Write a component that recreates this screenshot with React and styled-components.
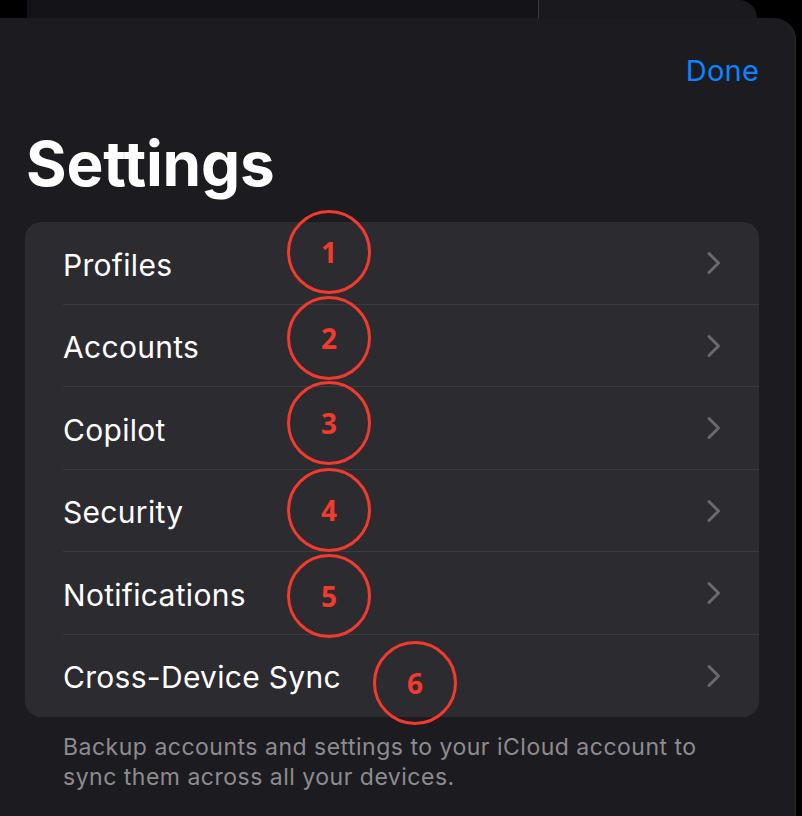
import styled, { createGlobalStyle } from "styled-components";

const GlobalStyle = createGlobalStyle`
  html, body {
    margin: 0;
    padding: 0;
    background: #000;
  }
  body {
    font-family: Inter, "Noto Sans", sans-serif;
    -webkit-font-smoothing: antialiased;
  }
`;

const items = ["Profiles", "Accounts", "Copilot", "Security", "Notifications", "Cross-Device Sync"];

const marks = [
  { n: 1, x: 329, y: 252 },
  { n: 2, x: 329, y: 338 },
  { n: 3, x: 329, y: 423 },
  { n: 4, x: 329, y: 510 },
  { n: 5, x: 329, y: 596 },
  { n: 6, x: 415, y: 683 },
];

const Chevron = () => (
  <svg width="16" height="24" viewBox="0 0 16 24" fill="none">
    <path d="M3 2.5 L12.5 12 L3 21.5" stroke="#6a696e" strokeWidth="3" strokeLinecap="round" strokeLinejoin="round" />
  </svg>
);

const App = () => {
  return (
    <>
      <GlobalStyle />
      <Page>
        <BackSheet>
          <BackPane />
          <BackPaneRight />
        </BackSheet>
        <Sheet>
          <Header>
            <DoneButton>Done</DoneButton>
          </Header>
          <Title>Settings</Title>
          <Card>
            {items.map((label, i) => (
              <Row key={label} $last={i === items.length - 1}>
                <Label>{label}</Label>
                <Chevron />
              </Row>
            ))}
          </Card>
          <Footnote>
            Backup accounts and settings to your iCloud account to sync them across all your devices.
          </Footnote>
        </Sheet>
        {marks.map((m) => (
          <Mark key={m.n} style={{ left: m.x - 42, top: m.y - 42 }}>
            {m.n}
          </Mark>
        ))}
      </Page>
    </>
  );
};

export default App;

const Page = styled.div`
  position: relative;
  width: 802px;
  height: 816px;
  overflow: hidden;
  background: #000;
  display: flex;
  flex-direction: column;
`;

const BackSheet = styled.div`
  display: flex;
  height: 18px;
  margin: 0 45px 0 27px;
  border-radius: 0 22px 0 0;
  overflow: hidden;
  flex-shrink: 0;
`;

const BackPane = styled.div`
  width: 511px;
  background: #141317;
  border-right: 1px solid #3a393d;
`;

const BackPaneRight = styled.div`
  flex: 1;
  background: #1a191d;
`;

const Sheet = styled.div`
  flex: 1;
  margin-right: 6px;
  background: #1c1b1f;
  border-top-right-radius: 22px;
  padding: 0 36px 0 25px;
  border-right: 1px solid #2a292d;
`;

const Header = styled.div`
  display: flex;
  justify-content: flex-end;
  height: 67px;
  align-items: flex-end;
`;

const DoneButton = styled.span`
  font-size: 29px;
  color: #0a84ff;
  line-height: 1;
  letter-spacing: 0.2px;
`;

const Title = styled.h1`
  margin: 48px 0 0 1px;
  font-size: 62px;
  font-weight: 700;
  color: #fff;
  line-height: 1;
  letter-spacing: -0.2px;
`;

const Card = styled.div`
  margin-top: 27px;
  background: #2c2b2f;
  border-radius: 16px;
  overflow: hidden;
`;

const Row = styled.div`
  position: relative;
  height: 82.5px;
  display: flex;
  align-items: center;
  justify-content: space-between;
  padding: 0 37px 0 38px;

  &::after {
    content: "";
    display: ${(p) => (p.$last ? "none" : "block")};
    position: absolute;
    left: 38px;
    right: 0;
    bottom: 0;
    height: 1px;
    background: #3c3b40;
  }
`;

const Label = styled.span`
  font-size: 30px;
  letter-spacing: 0.3px;
  color: #fff;
  padding-top: 3px;
`;

const Footnote = styled.p`
  margin: 15px 0 0 38px;
  font-size: 23px;
  letter-spacing: 0.5px;
  line-height: 30px;
  color: #8d8c91;
  max-width: 655px;
`;

const Mark = styled.div`
  position: absolute;
  width: 84px;
  height: 84px;
  box-sizing: border-box;
  border: 3px solid #f23a2e;
  border-radius: 50%;
  display: flex;
  align-items: center;
  justify-content: center;
  font-family: "Open Sans", sans-serif;
  font-weight: 700;
  font-size: 28px;
  color: #f23a2e;
`;
